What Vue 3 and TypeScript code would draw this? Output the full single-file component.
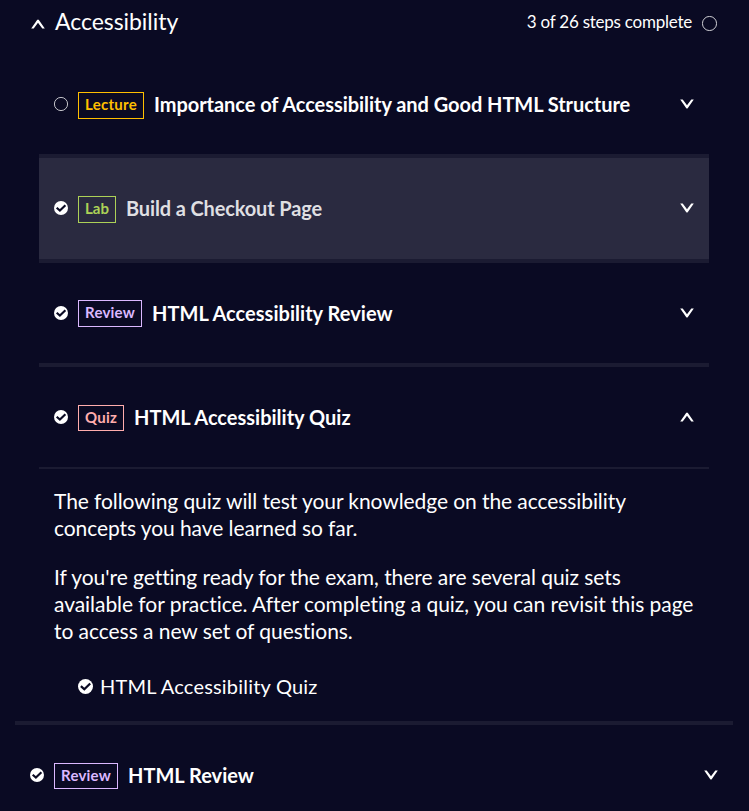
<script setup lang="ts">
import { h, type FunctionalComponent } from 'vue'

interface Step {
  kind: string
  title: string
  done: boolean
  open?: boolean
  active?: boolean
}

const steps: Step[] = [
  { kind: 'Lecture', title: 'Importance of Accessibility and Good HTML Structure', done: false },
  { kind: 'Lab', title: 'Build a Checkout Page', done: true, active: true },
  { kind: 'Review', title: 'HTML Accessibility Review', done: true },
  { kind: 'Quiz', title: 'HTML Accessibility Quiz', done: true, open: true },
]

const Chevron: FunctionalComponent<{ up?: boolean }> = (props) =>
  h('svg', { viewBox: '0 0 14 10', width: 14, height: 10, 'aria-hidden': 'true' }, [
    h('path', {
      d: props.up
        ? 'M0.2 9.5 L6.1 1.1 Q7 0 7.9 1.1 L13.8 9.5 H11.3 L7 3.8 L2.7 9.5 Z'
        : 'M0.2 0.5 L6.1 8.9 Q7 10 7.9 8.9 L13.8 0.5 H11.3 L7 6.2 L2.7 0.5 Z',
      fill: '#fff',
    }),
  ])
Chevron.props = { up: Boolean }

const Status: FunctionalComponent<{ done?: boolean; size?: number }> = (props) => {
  const size = props.size ?? 14
  return h(
    'svg',
    { viewBox: '0 0 14 14', width: size, height: size, 'aria-hidden': 'true' },
    props.done
      ? [
          h('circle', { cx: 7, cy: 7, r: 7, fill: '#fff' }),
          h('path', { d: 'M2.7 6.7 L5.9 9.6 L11.4 4.2', fill: 'none', stroke: '#0a0a23', 'stroke-width': 2.1 }),
        ]
      : [h('circle', { cx: 7, cy: 7, r: 6.6, fill: 'none', stroke: '#fff', 'stroke-width': 0.75 })],
  )
}
Status.props = { done: Boolean, size: Number }
</script>

<template>
  <main class="page">
    <header class="chapter">
      <Chevron up class="chapter-chevron" />
      <span class="chapter-name">Accessibility</span>
      <span class="progress">3 of 26 steps complete</span>
      <Status :size="15" class="chapter-status" />
    </header>

    <section class="steps">
      <article
        v-for="step in steps"
        :key="step.title"
        class="step"
        :class="[`step-${step.kind.toLowerCase()}`, { active: step.active, open: step.open }]"
      >
        <div class="row">
          <Status :done="step.done" class="status" />
          <span class="tag" :class="step.kind.toLowerCase()">{{ step.kind }}</span>
          <h3 class="title">{{ step.title }}</h3>
          <Chevron :up="step.open" class="toggle" />
        </div>
      </article>
      <div class="details">
        <p>The following quiz will test your knowledge on the accessibility concepts you have learned so far.</p>
        <p class="note">If you're getting ready for the exam, there are several quiz sets available for practice. After completing a quiz, you can revisit this page to access a new set of questions.</p>
        <div class="link"><Status done :size="15" /><span>HTML Accessibility Quiz</span></div>
      </div>
    </section>

    <section class="next">
      <div class="row">
        <Status done class="status" />
        <span class="tag review">Review</span>
        <h3 class="title">HTML Review</h3>
        <Chevron class="toggle" />
      </div>
    </section>
  </main>
</template>

<style>
body {
  background: #0a0a23;
}
</style>

<style scoped>
.page {
  box-sizing: border-box;
  height: 811px;
  overflow: hidden;
  background: #0a0a23;
  color: #fff;
  font-family: Lato, sans-serif;
  font-variant-ligatures: none;
}
svg {
  flex: none;
  display: block;
}
.chapter {
  display: flex;
  align-items: center;
  height: 42px;
  padding: 0 32px 0 31px;
  margin-bottom: 12px;
}
.chapter-chevron {
  margin-top: 6px;
}
.chapter-status {
  margin-top: 4px;
}
.chapter-name {
  margin-left: 10px;
  font-size: 23px;
  letter-spacing: -0.05px;
}
.progress {
  margin-left: auto;
  margin-right: 10px;
  font-size: 17px;
  letter-spacing: -0.24px;
}
.steps {
  margin: 0 40px 0 39px;
}
.row {
  display: flex;
  align-items: center;
  height: 100px;
  padding: 0 15px;
}
.step {
  border-bottom: 4px solid #1b1b32;
}
.step.active .row {
  box-sizing: border-box;
  height: 101px;
  padding-bottom: 1px;
  background: #2a2a40;
  color: #dfdfe2;
}
.step.open {
  border-bottom-width: 2px;
}
.step-review .status,
.step-quiz .status,
.next .status {
  margin-bottom: 1px;
}
.step-review .toggle,
.step-lab .toggle,
.next .toggle {
  margin-bottom: 1px;
}
.tag {
  box-sizing: border-box;
  height: 27px;
  margin-left: 10px;
  margin-top: 2px;
  border: 1px solid;
  font-size: 15px;
  font-weight: 700;
  line-height: 23px;
  text-align: center;
}
.lecture {
  width: 66px;
  color: #ffbf00;
  letter-spacing: 0.28px;
}
.lab {
  width: 38px;
  color: #acd157;
}
.review {
  width: 64px;
  color: #dbb8ff;
  letter-spacing: 0.2px;
}
.step-review .tag {
  margin-top: 0;
}
.quiz,
.next .tag {
  height: 26px;
}
.quiz {
  width: 46px;
  color: #ffadad;
  letter-spacing: 0.2px;
}
.title {
  flex: 1;
  margin: 0 0 0 10px;
  font-size: 20px;
  font-weight: 700;
  letter-spacing: 0;
  white-space: nowrap;
}
.step-lecture .title {
  letter-spacing: -0.05px;
}
.step-lab .title {
  letter-spacing: -0.14px;
}
.step-review .title {
  letter-spacing: 0.03px;
}
.details {
  height: 252px;
  box-sizing: border-box;
  padding: 18px 15px 0;
  font-size: 21px;
  line-height: 27px;
  letter-spacing: -0.08px;
}
.details p {
  margin: 0 0 22px;
}
.details .note {
  letter-spacing: -0.05px;
}
.link {
  display: flex;
  align-items: center;
  gap: 7px;
  margin: 29px 0 0 24px;
  font-size: 20px;
  letter-spacing: 0.2px;
}
.next {
  margin: 0 16px 0 15px;
  border-top: 4px solid #1b1b32;
}
</style>
